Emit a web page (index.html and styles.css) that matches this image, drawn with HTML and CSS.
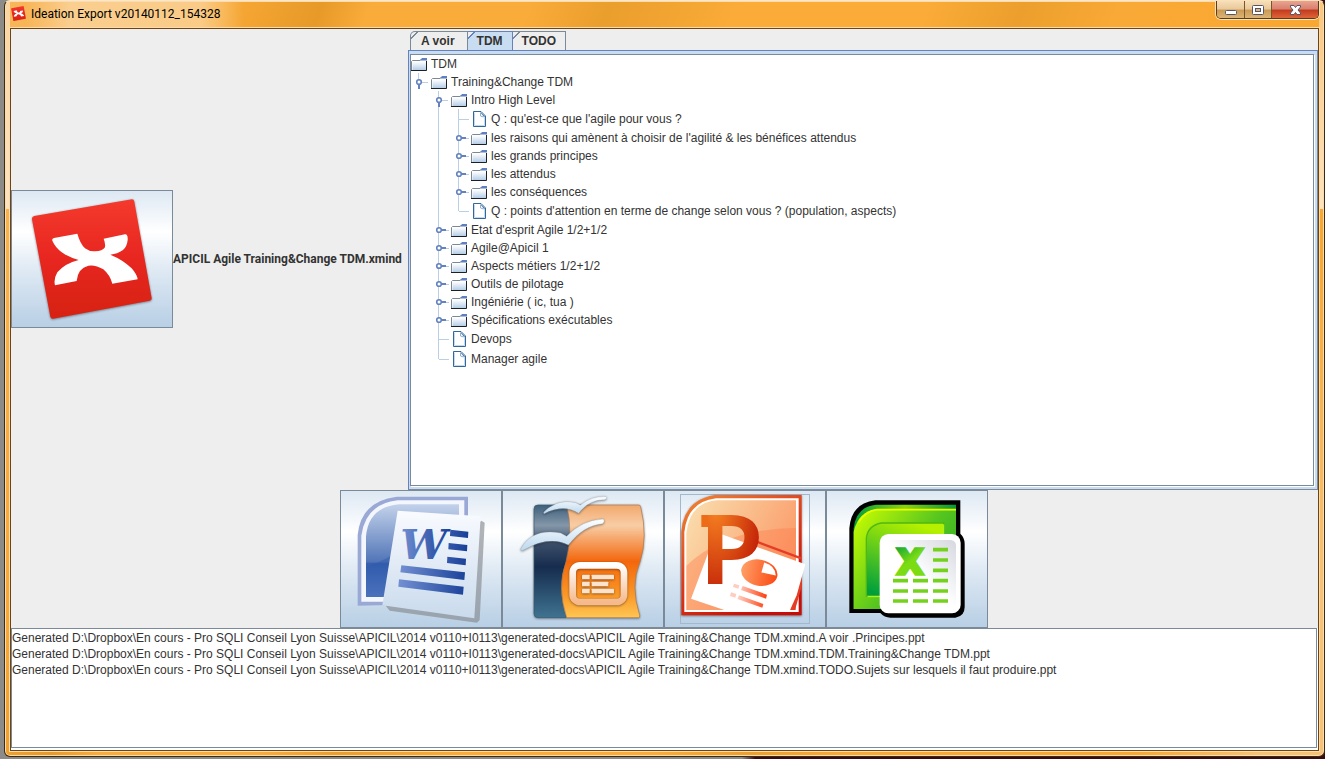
FILE: index.html
```html
<!DOCTYPE html>
<html lang="fr">
<head>
<meta charset="utf-8">
<title>Ideation Export</title>
<link rel="stylesheet" href="styles.css">
</head>
<body>
<svg class="defs" width="0" height="0" aria-hidden="true">
  <defs>
    <linearGradient id="gFolder" x1="0" y1="0" x2="0" y2="1"><stop offset="0.2" stop-color="#fff"/><stop offset="1" stop-color="#b0cae6"/></linearGradient>
    <linearGradient id="gRed" x1="0" y1="0" x2="0" y2="1"><stop offset="0" stop-color="#f43a2c"/><stop offset="0.5" stop-color="#e72620"/><stop offset="1" stop-color="#d62212"/></linearGradient>
    <symbol id="folder" viewBox="0 0 16 16">
      <path d="M1.500 4.500h7.500l1.500-1h5V14.500H1.500z" fill="url(#gFolder)"/>
      <path d="M0.500 14V5.500l1-1H9l1.500-1.500" fill="none" stroke="#7c8894"/>
      <path d="M9 4.500L11 2h5v2.500z" fill="#5f7fc0"/>
      <path d="M0 14.500h15.500V5" fill="none" stroke="#1c1f24"/>
    </symbol>
    <symbol id="file" viewBox="0 0 16 16">
      <path d="M2.500 0.500H10l4.500 4.500v10.500h-12z" fill="#fff" stroke="#336699"/>
      <path d="M3.500 14.500v-13" stroke="#c4daf0"/><path d="M3.500 14.500h10V6" fill="none" stroke="#c4daf0"/>
      <path d="M9 1l1 .5 4 4-1 .5-1.500-2z" fill="#336699"/><path d="M9.500 2v3l3 1" fill="none" stroke="#8fb0d2"/>
    </symbol>
    <symbol id="closed" viewBox="0 0 18 18">
      <path d="M10 9.500h8" stroke="#b8cfe5"/><path d="M10 9h5" stroke="#6382bf" stroke-width="2"/>
      <circle cx="8" cy="9" r="2.300" fill="#fff" stroke="#6382bf" stroke-width="1.600"/>
    </symbol>
    <symbol id="open" viewBox="0 0 18 18">
      <path d="M10 9.500h7" stroke="#b8cfe5"/><path d="M8 11v5" stroke="#6382bf" stroke-width="2"/>
      <circle cx="8" cy="9" r="2.300" fill="#fff" stroke="#6382bf" stroke-width="1.600"/>
    </symbol>
    <symbol id="xmark" viewBox="95 55 362 364">
      <path d="M103 108L396 58q6 0 7 7l52 289q1 7-6 8L159 416q-6 1-8-6L96 118q-1-8 7-10z" fill="url(#gRed)"/>
      <path d="M162 174L232 161Q240 190 255 205Q268 215 285 214Q308 212 314 203Q318 195 311 176L375 163Q384 162 383 180Q381 200 369 210Q352 222 331 224Q370 240 395 265Q412 285 413 298L337 311Q330 285 310 268Q285 253 265 257Q233 265 230 303L165 316Q160 298 172 277Q195 250 236 240Q175 223 157 182Q155 176 162 174z" fill="#fff"/>
    </symbol>
  </defs>
</svg>
<div class="window">
  <header class="titlebar">
    <svg class="app-icon" viewBox="95 55 362 364" aria-hidden="true"><use href="#xmark" x="95" y="55" width="362" height="364"/></svg>
    <h1 class="title">Ideation Export v20140112_154328</h1>
    <div class="controls">
      <button class="control" type="button" aria-label="Réduire"><svg width="27" height="18"><rect x="8.500" y="9.500" width="11" height="4" rx="1" fill="#fff" stroke="#53566a"/></svg></button>
      <button class="control" type="button" aria-label="Agrandir"><svg width="26" height="18"><rect x="7.500" y="4.500" width="11" height="9" rx="1" fill="#fff" stroke="#53566a"/><rect x="10.500" y="7.500" width="5" height="3" fill="#dfb384" stroke="#53566a"/></svg></button>
      <button class="control close" type="button" aria-label="Fermer"><svg width="46" height="18"><path d="M18.500 4.500h3.500l1.500 2 1.500-2h3.500v1.500l-2.500 3 2.500 3v1.500h-3.500l-1.500-2-1.500 2h-3.500v-1.500l2.500-3-2.500-3z" fill="#fff" stroke="#53566a"/></svg></button>
    </div>
  </header>
  <main class="client">
    <section class="workspace">
      <div class="source">
        <button class="tile" type="button" aria-label="Ouvrir XMind">
          <svg viewBox="36 33 480 408"><use class="lifted" href="#xmark" x="95" y="55" width="362" height="364"/></svg>
        </button>
        <span class="source-name">APICIL Agile Training&amp;Change TDM.xmind</span>
      </div>
      <div class="tabbed">
        <div class="tabs" role="tablist">
          <button class="tab" type="button" role="tab">A voir</button>
          <button class="tab selected" type="button" role="tab" aria-selected="true">TDM</button>
          <button class="tab" type="button" role="tab">TODO</button>
        </div>
        <div class="panel" role="tabpanel">
          <div class="scroll">
            <div class="row"><svg class="icon"><use href="#folder"/></svg>TDM</div>
            <ul class="tree">
              <li><div class="row"><button class="handle" type="button" aria-label="Replier"><svg><use href="#open"/></svg></button><svg class="icon"><use href="#folder"/></svg>Training&amp;Change TDM</div>
                <ul class="tree nested">
                  <li><div class="row"><button class="handle" type="button" aria-label="Replier"><svg><use href="#open"/></svg></button><svg class="icon"><use href="#folder"/></svg>Intro High Level</div>
                    <ul class="tree nested">
                      <li><div class="row leaf"><svg class="icon"><use href="#file"/></svg>Q : qu'est-ce que l'agile pour vous ?</div></li>
                      <li><div class="row"><button class="handle" type="button" aria-label="Déplier"><svg><use href="#closed"/></svg></button><svg class="icon"><use href="#folder"/></svg>les raisons qui amènent à choisir de l'agilité &amp; les bénéfices attendus</div></li>
                      <li><div class="row"><button class="handle" type="button" aria-label="Déplier"><svg><use href="#closed"/></svg></button><svg class="icon"><use href="#folder"/></svg>les grands principes</div></li>
                      <li><div class="row"><button class="handle" type="button" aria-label="Déplier"><svg><use href="#closed"/></svg></button><svg class="icon"><use href="#folder"/></svg>les attendus</div></li>
                      <li><div class="row"><button class="handle" type="button" aria-label="Déplier"><svg><use href="#closed"/></svg></button><svg class="icon"><use href="#folder"/></svg>les conséquences</div></li>
                      <li><div class="row leaf"><svg class="icon"><use href="#file"/></svg>Q : points d'attention en terme de change selon vous ? (population, aspects)</div></li>
                    </ul>
                  </li>
                  <li><div class="row"><button class="handle" type="button" aria-label="Déplier"><svg><use href="#closed"/></svg></button><svg class="icon"><use href="#folder"/></svg>Etat d'esprit Agile 1/2+1/2</div></li>
                  <li><div class="row"><button class="handle" type="button" aria-label="Déplier"><svg><use href="#closed"/></svg></button><svg class="icon"><use href="#folder"/></svg>Agile@Apicil 1</div></li>
                  <li><div class="row"><button class="handle" type="button" aria-label="Déplier"><svg><use href="#closed"/></svg></button><svg class="icon"><use href="#folder"/></svg>Aspects métiers 1/2+1/2</div></li>
                  <li><div class="row"><button class="handle" type="button" aria-label="Déplier"><svg><use href="#closed"/></svg></button><svg class="icon"><use href="#folder"/></svg>Outils de pilotage</div></li>
                  <li><div class="row"><button class="handle" type="button" aria-label="Déplier"><svg><use href="#closed"/></svg></button><svg class="icon"><use href="#folder"/></svg>Ingéniérie ( ic, tua )</div></li>
                  <li><div class="row"><button class="handle" type="button" aria-label="Déplier"><svg><use href="#closed"/></svg></button><svg class="icon"><use href="#folder"/></svg>Spécifications exécutables</div></li>
                  <li><div class="row leaf"><svg class="icon"><use href="#file"/></svg>Devops</div></li>
                  <li><div class="row leaf"><svg class="icon"><use href="#file"/></svg>Manager agile</div></li>
                </ul>
              </li>
            </ul>
          </div>
        </div>
      </div>
    </section>
    <nav class="exports" aria-label="Exports">
      <button class="tile" type="button" aria-label="Word">
        <svg viewBox="18 18 480 408">
          <defs>
            <linearGradient id="w1" x1="0" y1="0" x2="0" y2="1"><stop offset="0" stop-color="#c3d2ea"/><stop offset="0.620" stop-color="#5275b8"/><stop offset="0.640" stop-color="#355fae"/><stop offset="1" stop-color="#6585ca"/></linearGradient>
            <linearGradient id="w2"><stop offset="0" stop-color="#7390d2"/><stop offset="1" stop-color="#183f98"/></linearGradient>
            <linearGradient id="w3" x1="0" y1="0" x2="0" y2="1"><stop offset="0" stop-color="#f9fbff"/><stop offset="1" stop-color="#c9daec"/></linearGradient>
          </defs>
          <path d="M68 362V150Q78 48 185 35h214v320z" fill="#9aa8d5"/>
          <path d="M79 350V152Q92 56 188 46h200v304z" fill="#f3f7fd"/>
          <path d="M93 336V155Q100 66 192 58h180v278z" fill="url(#w1)"/>
          <path d="M93 246q60-20 100-50v140H93z" fill="#2d58aa" opacity=".45"/>
          <path d="M152 362l12 15 262 36 8-8 15-292-10-6z" fill="#858b91" opacity=".65"/>
          <path d="M188 77l249 17-19 306-276-39z" fill="url(#w3)"/>
          <text x="196" y="222" class="word-letter" fill="url(#w2)">W</text>
          <g fill="url(#w2)"><path d="M346 134l54 6-1 19-54-6zM341 174l56 6-1 19-56-6zM337 215l56 6-1 20-56-7zM199 241l191 21-2 23-192-23zM192 283l194 22-2 24-194-24z"/></g>
        </svg>
      </button>
      <button class="tile" type="button" aria-label="Impress">
        <svg viewBox="15 18 480 408">
          <defs>
            <linearGradient id="o1" x1="0" y1="0" x2="0" y2="1"><stop offset="0" stop-color="#3d5f7b"/><stop offset="0.180" stop-color="#8497a9"/><stop offset="0.350" stop-color="#3a4c67"/><stop offset="0.550" stop-color="#162c4e"/><stop offset="1" stop-color="#3f7390"/></linearGradient>
            <linearGradient id="o2" x1="0" y1="0" x2="0" y2="1"><stop offset="0" stop-color="#f1a86c"/><stop offset="0.180" stop-color="#f8cda5"/><stop offset="0.500" stop-color="#f3670c"/><stop offset="0.800" stop-color="#fa9828"/><stop offset="1" stop-color="#ffc653"/></linearGradient>
            <linearGradient id="o3" x1="0" y1="0" x2="0" y2="1"><stop offset="0" stop-color="#fff"/><stop offset="1" stop-color="#f6b98c"/></linearGradient>
            <linearGradient id="o4" x1="0" y1="0" x2="0" y2="1"><stop offset="0" stop-color="#fff"/><stop offset="1" stop-color="#bcd9f0"/></linearGradient>
          </defs>
          <g class="lifted">
            <path d="M120 60h90q20 70-5 170-30 70 0 168h-85q-12 0-12-12V72q0-12 12-12z" fill="url(#o1)" stroke="#355771" stroke-width="2"/>
            <path d="M206 60h216q5 0 6 6 22 90-2 165-30 70-1 160l-1 7H206q-30-90-2-168 22-90 2-170z" fill="url(#o2)" stroke="#a77755" stroke-width="2"/>
          </g>
          <g class="lifted" fill="none"><rect x="224" y="241" width="154" height="110" rx="22" stroke="url(#o3)" stroke-width="20"/></g>
          <g class="lifted" fill="#fde2cd"><rect x="252" y="269" width="23" height="14" rx="2"/><rect x="281" y="269" width="67" height="14" rx="2"/><rect x="252" y="290" width="23" height="14" rx="2"/><rect x="281" y="290" width="50" height="14" rx="2"/><rect x="252" y="311" width="23" height="14" rx="2"/><rect x="281" y="311" width="67" height="14" rx="2"/></g>
          <g class="lifted" fill="url(#o4)" stroke="#9aa9b5" stroke-width="1">
            <path d="M137 82q38-42 96-29l14 7q34-27 76-25 8 4-3 9-48 0-78 41-43-29-104 1z"/>
            <path d="M68 192q34-64 120-48l18 10q46-49 110-52 6 8-2 14-58 5-103 64-58-30-136 16-8 2-7-4z"/>
          </g>
        </svg>
      </button>
      <button class="tile" type="button" aria-label="PowerPoint">
        <svg viewBox="15 18 480 408">
          <defs>
            <linearGradient id="p1" x1="0" y1="0" x2="0.600" y2="1"><stop offset="0" stop-color="#f18a36"/><stop offset="0.500" stop-color="#e2401a"/><stop offset="1" stop-color="#c90c05"/></linearGradient>
            <linearGradient id="p2" x1="0" y1="0" x2="1" y2="0.500"><stop offset="0" stop-color="#fae0b0"/><stop offset="1" stop-color="#fb9a68"/></linearGradient>
            <radialGradient id="p3" cx="0.250" cy="0.150" r="0.850"><stop offset="0" stop-color="#f88422"/><stop offset="0.900" stop-color="#c42508"/></radialGradient>
            <linearGradient id="p4"><stop offset="0" stop-color="#ff9f66"/><stop offset="1" stop-color="#fb4a14"/></linearGradient>
            <linearGradient id="p5" x1="0" y1="0" x2="1" y2="0"><stop offset="0" stop-color="#ffd2c8"/><stop offset="1" stop-color="#ff3d0c"/></linearGradient>
          </defs>
          <rect x="61.500" y="28.500" width="387" height="387" fill="none" stroke="#a3b8cc" stroke-width="3"/>
          <path class="lifted" d="M64 391V140Q72 44 165 30h260v361z" fill="url(#p1)"/>
          <path d="M73 381V142Q82 50 168 40h248v341z" fill="#fff"/>
          <path d="M79 375V145Q88 54 170 46h238v329z" fill="url(#p2)"/>
          <path d="M79 242Q200 130 408 129v246H79z" fill="#ff7b4c" opacity=".4"/>
          <path d="M285 172l140 52-34 151h14l20-70v-88l-138-52z" fill="#e53d25"/>
          <path d="M168 142l-75 199 100 34h197l20-44 26-93z" fill="#fff"/>
          <path d="M150 375h260v6H73z" fill="#fff"/>
          <path d="M124 90h36v36h-36z" fill="#ee6b18"/>
          <text x="122" y="297" class="ppt-letter" fill="url(#p3)">P</text>
          <g transform="rotate(12 298 263)"><ellipse cx="298" cy="263" rx="55" ry="39" fill="url(#p4)"/><path d="M304 261l2-31q34 2 42 31z" fill="#fff"/></g>
          <g fill="url(#p5)"><path d="M248 303l73 26-3 12-75-26zM237 331l73 26-3 11-75-26z"/></g>
          <path d="M222 296l16 5-3 10-16-5zM213 322l16 5-3 11-16-5z" fill="#ffcdbf"/>
        </svg>
      </button>
      <button class="tile" type="button" aria-label="Excel">
        <svg viewBox="15 18 480 408">
          <defs>
            <linearGradient id="e1" x1="0" y1="0" x2="1" y2="0.700"><stop offset="0" stop-color="#ceff00"/><stop offset="0.600" stop-color="#55c51f"/><stop offset="1" stop-color="#2fae25"/></linearGradient>
            <linearGradient id="e2" x1="0.600" y1="0" x2="0.200" y2="1"><stop offset="0" stop-color="#b4f000"/><stop offset="1" stop-color="#009f3c"/></linearGradient>
            <linearGradient id="e3" x1="0" y1="0" x2="0.500" y2="1"><stop offset="0" stop-color="#009c3d"/><stop offset="0.600" stop-color="#7bdc14"/></linearGradient>
            <linearGradient id="e4" x1="0" y1="1" x2="1" y2="0"><stop offset="0.500" stop-color="#fff"/><stop offset="1" stop-color="#d5d8df"/></linearGradient>
            <linearGradient id="e5"><stop offset="0" stop-color="#009c3d"/><stop offset="0.500" stop-color="#8cd30b"/><stop offset="1" stop-color="#05983b"/></linearGradient>
          </defs>
          <path d="M82 384V130Q88 54 160 46h255v100q13 12 13 30v190q0 28-28 32H205q-18 0-30-14z" fill="#000"/>
          <path d="M95 372V130Q102 65 162 59h240v313z" fill="url(#e5)"/>
          <path d="M95 372V140Q110 78 165 73h237v299z" fill="url(#e1)"/>
          <path d="M110 112Q130 78 165 74h237" fill="none" stroke="#eaff00" stroke-width="5"/>
          <path d="M133 333V160q4-38 45-46h187v219z" fill="url(#e2)" stroke="#52b810" stroke-width="4"/>
          <path d="M137 335h40M365 118v30" stroke="#b3ff22" stroke-width="3"/>
          <rect x="173" y="147" width="243" height="238" rx="26" fill="#fff"/>
          <rect x="186" y="165" width="216" height="207" rx="16" fill="url(#e4)"/>
          <text x="225" y="266" class="excel-letter" fill="url(#e3)" stroke="url(#e3)">X</text>
          <path d="M333 194h45M333 225h45M333 256h45M213 287h45M273 287h45M333 287h45M213 318h45M273 318h45M333 318h45M213 348h45M273 348h45M333 348h45" stroke="#74d21d" stroke-width="11"/>
        </svg>
      </button>
    </nav>
    <div class="log-area">
      <textarea class="log" readonly wrap="off" aria-label="Journal">Generated D:\Dropbox\En cours - Pro SQLI Conseil Lyon Suisse\APICIL\2014 v0110+I0113\generated-docs\APICIL Agile Training&amp;Change TDM.xmind.A voir .Principes.ppt
Generated D:\Dropbox\En cours - Pro SQLI Conseil Lyon Suisse\APICIL\2014 v0110+I0113\generated-docs\APICIL Agile Training&amp;Change TDM.xmind.TDM.Training&amp;Change TDM.ppt
Generated D:\Dropbox\En cours - Pro SQLI Conseil Lyon Suisse\APICIL\2014 v0110+I0113\generated-docs\APICIL Agile Training&amp;Change TDM.xmind.TODO.Sujets sur lesquels il faut produire.ppt</textarea>
    </div>
  </main>
</div>
</body>
</html>
```

FILE: styles.css
```css
* { box-sizing: border-box; }

body {
  margin: 0;
  height: 100vh;
  padding: 0 0 2px 4px;
  background: linear-gradient(90deg, #8d8b88 56%, #3a0a10 57%);
  color: #333;
  font: 12px/16px "Liberation Sans", Arial, sans-serif;
  overflow: hidden;
}

button { margin: 0; padding: 0; border: 0; background: none; font: inherit; color: inherit; }
.defs { position: absolute; }

.window {
  display: flex;
  flex-direction: column;
  height: 100%;
  padding: 0 5px 5px;
  border: 1px solid #3b2a14;
  border-top-color: #fbe7c8;
  border-radius: 6px;
  background:
    linear-gradient(#fbd5a0, #fde3c0) left top / 5px 208px no-repeat,
    linear-gradient(#fbc67c, #fde3c0) right top / 5px 208px no-repeat,
    linear-gradient(110deg, #f8b75c 0, #f8a835 14%, #e79a28 20%, #faac3a 23%, #faac3a 33%, #ea9e2b 38%, #faab38 46%, #faab38 58%, #ec9f2c 64%, #f9a935 70%, #f8a730 88%, #f7c275 96%);
  box-shadow: inset 0 0 0 1px #fbdcae;
}

.titlebar { display: flex; align-items: flex-start; height: 27px; }
.app-icon { width: 15px; height: 15px; margin: 5px 0 0 1px; }
.title {
  margin: 0;
  padding: 5px 24px 6px 5px;
  color: #000;
  font: 12px/16px Roboto, "Open Sans", sans-serif;
  background: linear-gradient(90deg, #fbdcae00, #fbdcaeaa 20%, #fbdcaeaa 80%, #fbdcae00);
}
.controls {
  display: flex;
  height: 18px;
  margin-left: auto;
  border: 1px solid #5a3b1c;
  border-top: 0;
  border-radius: 0 0 5px 5px;
  box-shadow: 0 0 0 1px #fde0b4;
  overflow: hidden;
}
.control {
  height: 18px;
  border-right: 1px solid #7a5528;
  background: linear-gradient(#f6dfbc 0, #e9c898 45%, #c99a55 50%, #dfb878 100%);
}
.control svg { display: block; }
.control.close { border-right: 0; background: linear-gradient(#eaa392 0, #d8806c 45%, #c23a1e 50%, #e36a3c 100%); }

.client {
  flex: 1;
  min-height: 0;
  display: grid;
  grid-template-rows: 1fr auto 122px;
  border: 1px solid #6d4514;
  background: #eee;
  box-shadow: 0 0 0 1px #fddcaa;
}

.workspace { display: grid; grid-template-columns: 397px 1fr; min-height: 0; }
.source { display: flex; align-items: center; padding-bottom: 2px; white-space: nowrap; font: bold 12px/16px Roboto, sans-serif; }

.tile {
  flex: none;
  width: 162px;
  height: 138px;
  border: 1px solid #7a8a99;
  background: linear-gradient(#dde8f3 0, #fff 30%, #dde8f3 60%, #b8cfe5 100%);
}
.tile svg { display: block; width: 160px; height: 136px; }
.lifted { filter: drop-shadow(0 2px 3px #0007); }
.word-letter { font: italic bold 125px "DejaVu Serif", serif; }
.ppt-letter { font: 900 287px Lato, sans-serif; }
.excel-letter { font: bold 102px "DejaVu Sans", sans-serif; stroke-width: 10px; }

.tabbed { display: flex; flex-direction: column; min-width: 0; min-height: 0; }
.tabs { display: flex; padding: 2px 0 0 2px; }
.tab {
  height: 19px;
  padding: 0 12px 0 10px;
  border: 1px solid #7a8a99;
  border-bottom: 0;
  border-left-width: 0;
  background: linear-gradient(135deg, #eee 4px, #7a8a99 4px, #7a8a99 5px, #eee 5px);
  font-weight: bold;
}
.tab:first-child { border-left-width: 1px; border-top-left-radius: 5px; }
.tab.selected {
  padding: 0 9px;
  border-color: #6382bf;
  background: linear-gradient(135deg, #eee 4px, #6382bf 4px, #6382bf 5px, #c8ddf2 5px);
}
.tab:last-child { padding: 0 9px; }
.panel {
  flex: 1;
  min-height: 0;
  padding: 3px 3px 3px 1px;
  border: 1px solid #6382bf;
  border-right-color: #7a8a99;
  border-bottom-color: #7a8a99;
  background: #c8ddf2;
}
.scroll {
  height: 100%;
  border: 1px solid #7a8a99;
  background: #fff;
  box-shadow: 1px 1px 0 #fff;
  overflow: auto;
}

.tree { margin: 0; padding: 0; list-style: none; }
.nested { margin-left: 20px; }
.tree li { position: relative; }
.tree li::before {
  content: "";
  position: absolute;
  left: 7px;
  top: 0;
  height: 100%;
  border-left: 1px solid #b8cfe5;
}
.tree li:last-child::before { height: 10px; }
.row { display: flex; align-items: center; height: 18px; line-height: 18px; white-space: nowrap; }
.row.leaf { height: 20px; }
.row.leaf::before { content: ""; width: 10px; margin: 0 2px 0 8px; border-top: 1px solid #b8cfe5; }
.icon { flex: none; width: 16px; height: 16px; margin-right: 4px; }
.handle { position: relative; flex: none; width: 20px; height: 18px; }
.handle svg { display: block; width: 18px; height: 18px; }

.exports { display: flex; justify-content: center; padding-right: 2px; }

.log-area { padding: 0 1px 2px 0; background: #fff; }
.log {
  display: block;
  width: 100%;
  height: 100%;
  margin: 0;
  padding: 1px 0;
  border: 1px solid #7a8a99;
  outline: 0;
  resize: none;
  background: #fff;
  color: #333;
  font: inherit;
  white-space: pre;
}
```
